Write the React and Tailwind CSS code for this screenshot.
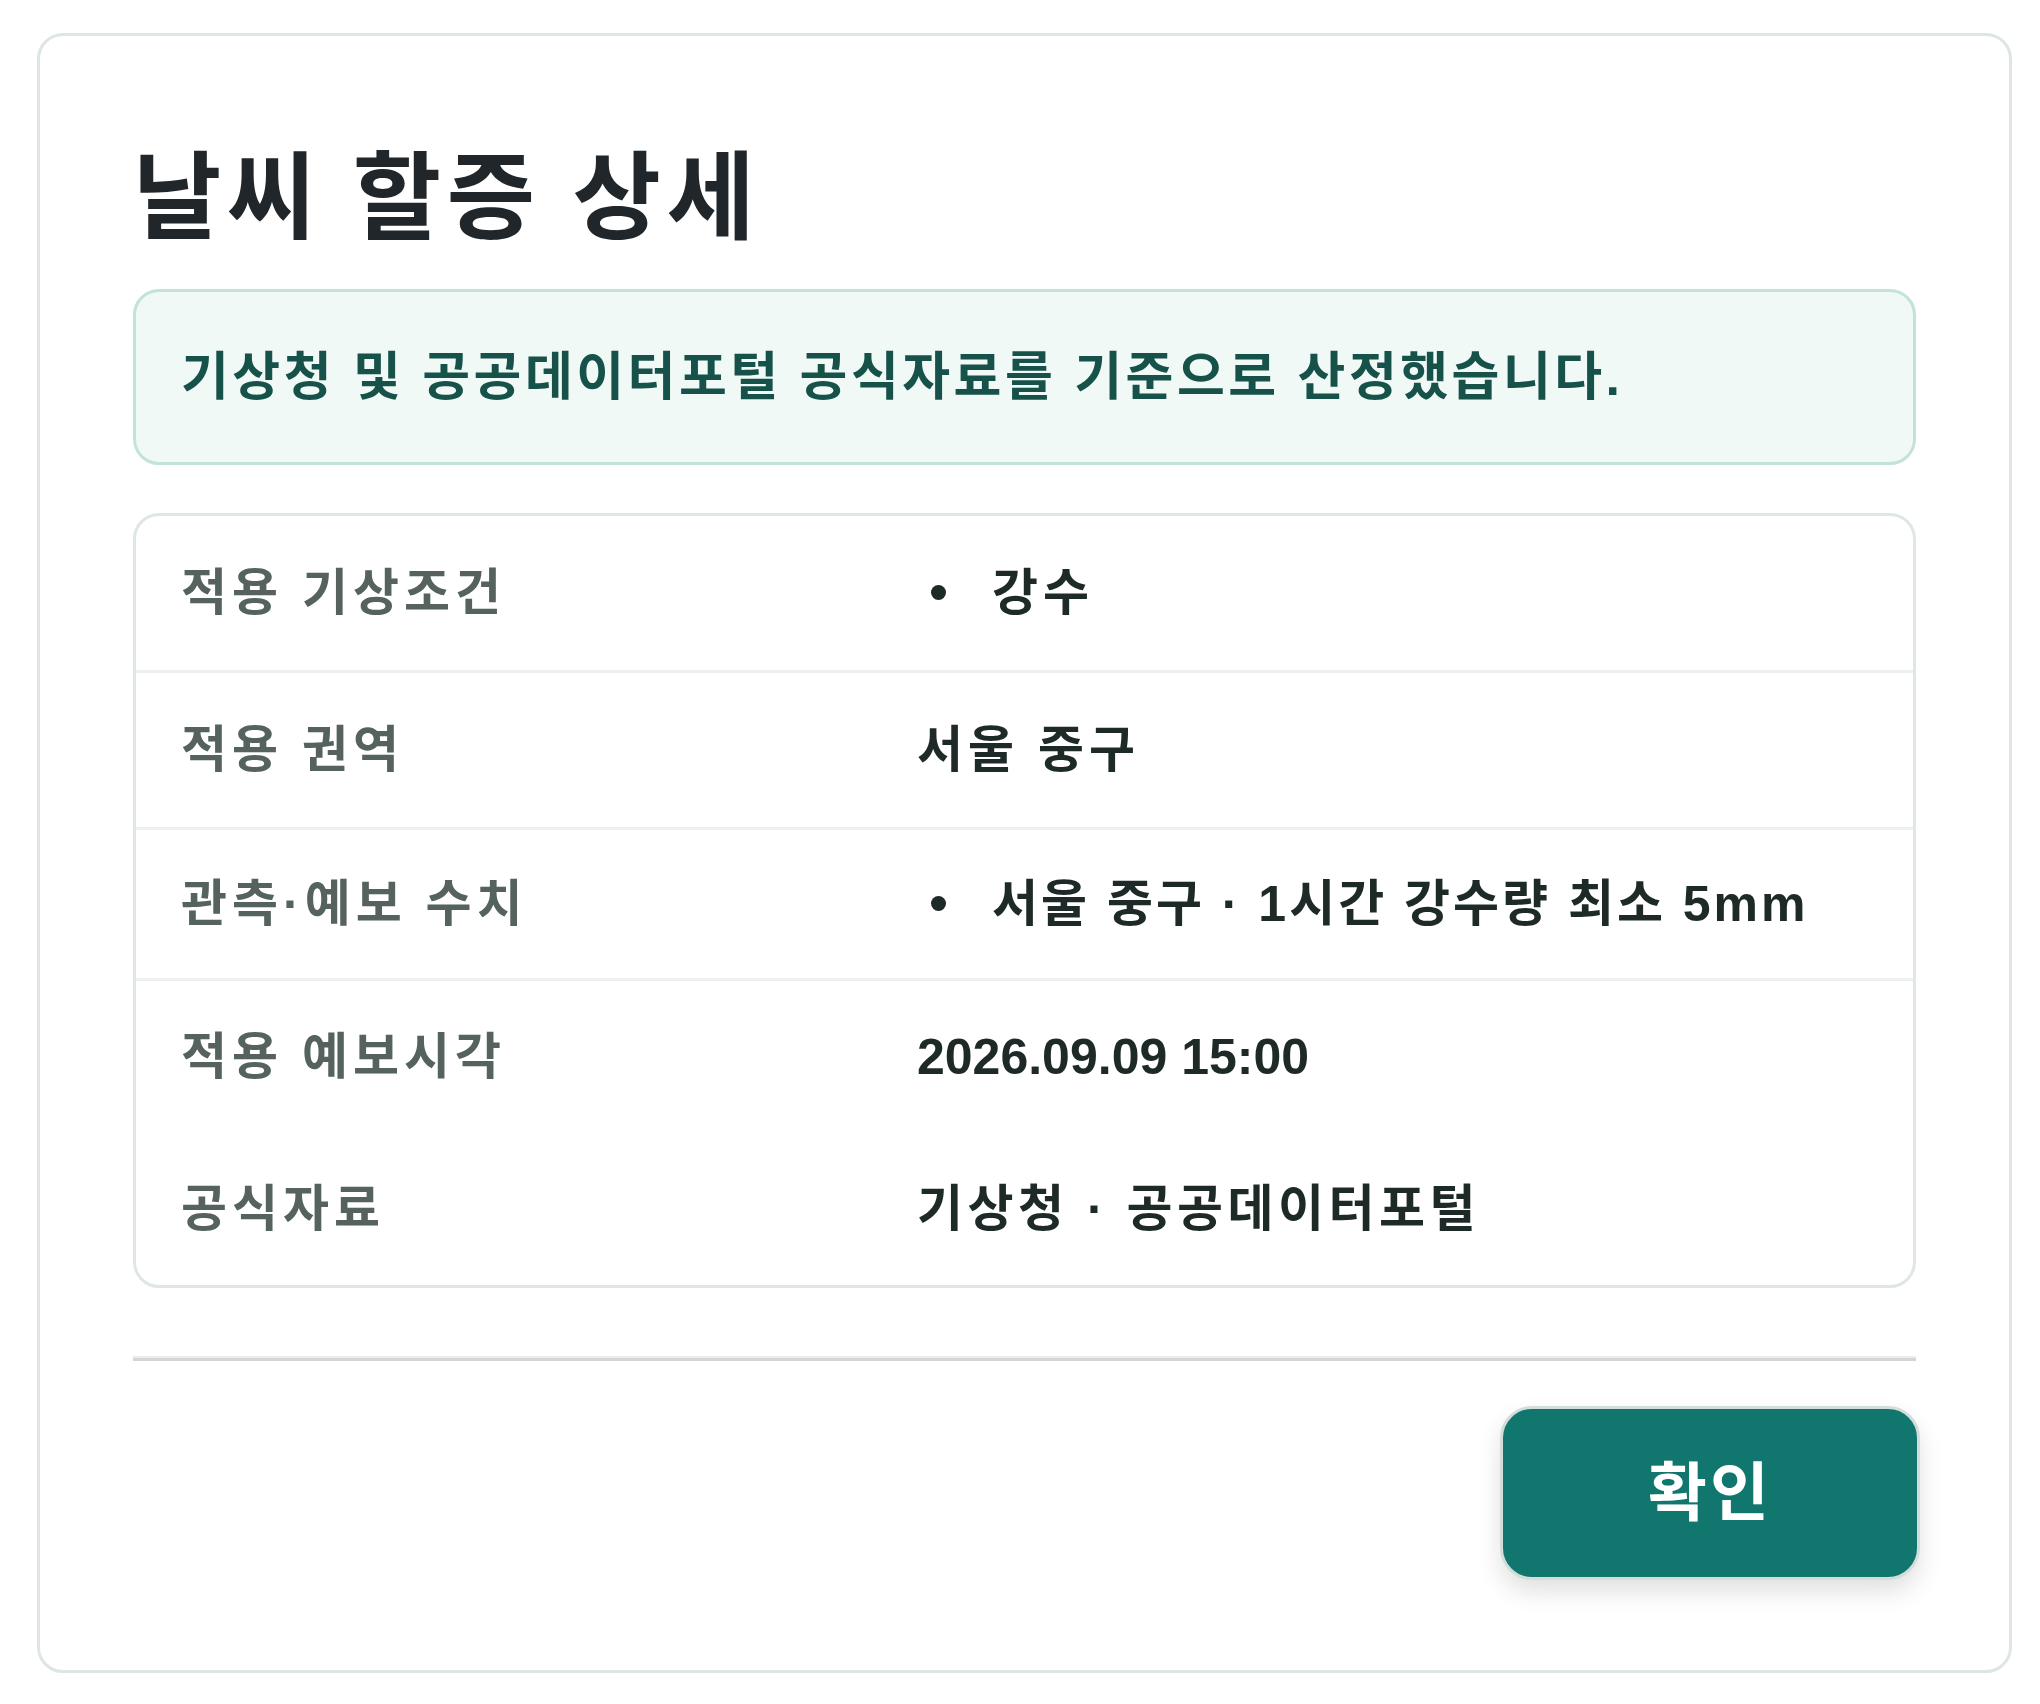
const rows = [
  { label: "적용 기상조건", value: "강수", bullet: true, pad: "py-[41px]", track: "tracking-[5px]", line: true },
  { label: "적용 권역", value: "서울 중구", pad: "py-[41px]", track: "tracking-[5px]", line: true },
  {
    label: "관측·예보 수치",
    value: "서울 중구 · 1시간 강수량 최소 5mm",
    bullet: true,
    pad: "py-[38px]",
    track: "tracking-[3px]",
    line: true,
  },
  { label: "적용 예보시각", value: "2026.09.09 15:00", pad: "py-[40px]", track: "tracking-normal" },
  { label: "공식자료", value: "기상청 · 공공데이터포털", pad: "py-[40px]", track: "tracking-[4.5px]" },
];

export default function App() {
  return (
    <div
      className="min-h-screen bg-white pl-[37px] pt-[33px]"
      style={{ fontFamily: '"Liberation Sans", "Noto Sans CJK KR", sans-serif' }}
    >
      <div className="w-[1975px] rounded-[26px] border-[3px] border-[#dde6e2] bg-white px-[93px] pb-[90px] pt-[109px]">
        <h1 className="text-[96px] font-bold leading-[1.1] tracking-[5.5px] text-[#21262a]">날씨 할증 상세</h1>

        <div className="mt-[38px] rounded-[26px] border-[3px] border-[#c2e3d9] bg-[#f0f9f6] px-[45px] py-[50px]">
          <p className="text-[52px] font-semibold leading-[1.35] tracking-[3.5px] text-[#17524a]">
            기상청 및 공공데이터포털 공식자료를 기준으로 산정했습니다.
          </p>
        </div>

        <div className="mt-[48px] rounded-[26px] border-[3px] border-[#dfe7e5] bg-white">
          {rows.map((row) => (
            <div
              key={row.label}
              className={`grid grid-cols-[736px_1fr] items-center px-[45px] ${row.pad} ${
                row.line ? "border-b-[3px] border-[#ecf1f0]" : ""
              }`}
            >
              <span className="text-[50px] font-semibold leading-[72px] tracking-[5px] text-[#55625e]">
                {row.label}
              </span>
              <div className={`flex items-center text-[50px] font-semibold leading-[72px] text-[#1e2a27] ${row.track}`}>
                {row.bullet && (
                  <span className="ml-[14px] mr-[46px] h-[15px] w-[15px] shrink-0 rounded-full bg-[#1e2a27]" />
                )}
                <span>{row.value}</span>
              </div>
            </div>
          ))}
        </div>

        <div className="mt-[68px] border-t-2 border-b-[3px] border-t-[#ebebeb] border-b-[#d8d4cf]" />

        <div className="-mr-[4px] mt-[45px] flex justify-end">
          <button className="h-[174px] w-[420px] rounded-[32px] border-[3px] border-[#d3dedb] bg-[#11766d] text-[64px] font-bold tracking-[3px] text-white shadow-[0_12px_24px_rgba(0,0,0,0.12)]">
            확인
          </button>
        </div>
      </div>
    </div>
  );
}
